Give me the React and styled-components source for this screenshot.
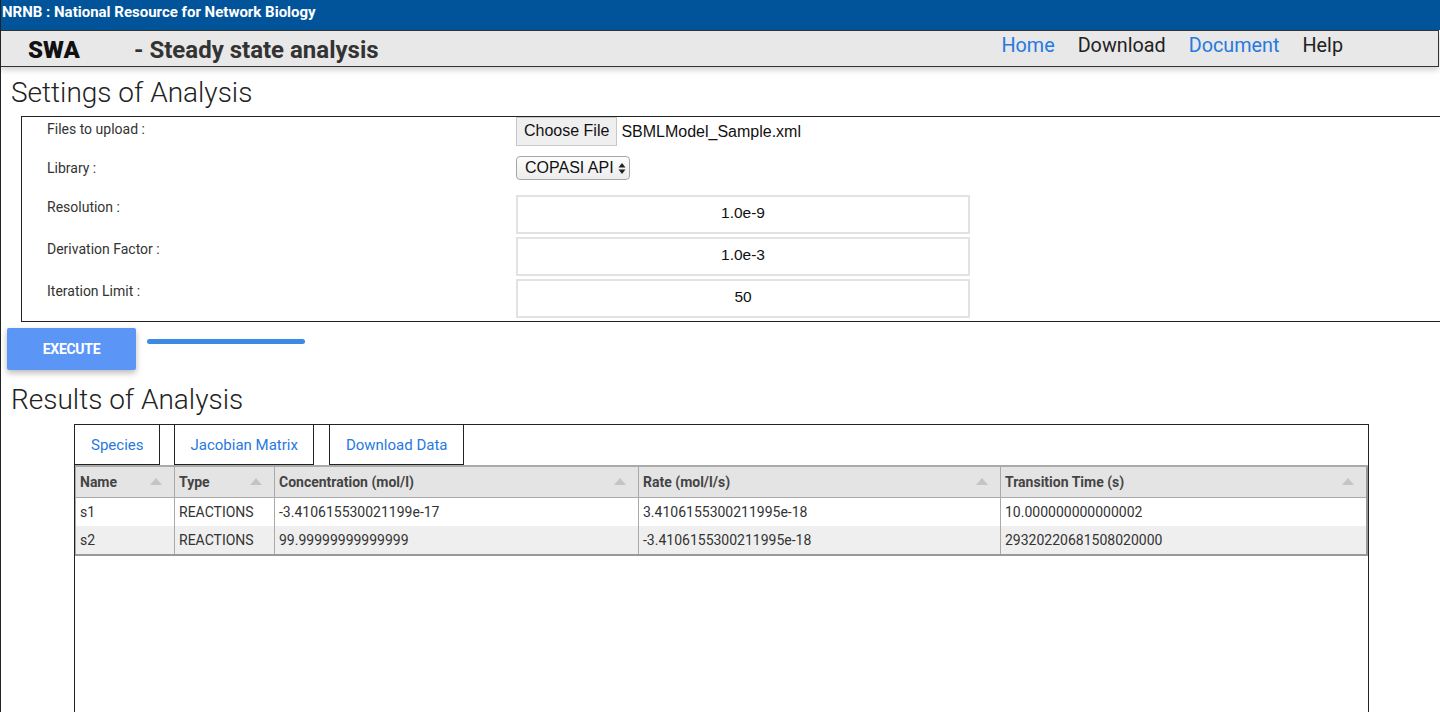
import React from "react";
import styled, { createGlobalStyle } from "styled-components";

const GlobalStyle = createGlobalStyle`
  html, body {
    margin: 0;
    padding: 0;
    background: #fff;
    overflow: hidden;
  }
  body {
    font-family: Roboto, "Liberation Sans", Arial, sans-serif;
    color: #333;
  }
`;

const Page = styled.div`
  height: 712px;
  border-left: 1px solid #222;
  box-sizing: border-box;
  overflow: hidden;
`;

const TopBar = styled.div`
  height: 30px;
  background: #02549a;
  color: #fff;
  font-weight: 700;
  font-size: 15px;
  line-height: 24px;
  padding-left: 1px;
`;

const NavBar = styled.div`
  height: 37px;
  box-sizing: border-box;
  width: 1439px;
  margin-left: -1px;
  display: flex;
  align-items: center;
  justify-content: space-between;
  background: #e8e8e8;
  border: 1px solid #333;
  box-shadow: 0 3px 6px rgba(0, 0, 0, 0.18);
  position: relative;
  padding: 0 95px 0 27px;
`;

const Brand = styled.div`
  display: flex;
  align-items: center;
  font-size: 24px;
  font-weight: 700;
  padding-top: 2px;

  b {
    color: #111;
    width: 106px;
  }
  span {
    color: #333;
  }
`;

const NavLinks = styled.nav`
  display: flex;
  gap: 23px;
  padding-bottom: 6px;
`;

const NavLink = styled.a`
  font-size: 19.8px;
  color: ${({ $active }) => ($active ? "#2779e0" : "#222")};
  text-decoration: none;
`;

const SectionTitle = styled.h2`
  margin: ${({ $top }) => $top}px 0 0 10px;
  font-size: 28px;
  font-weight: 300;
  line-height: 33px;
  color: #222;
  height: 33px;
`;

const SettingsBox = styled.div`
  margin: 7px 0 0 20px;
  border: 1px solid #222;
  border-right: none;
  padding: 0 0 3px 25px;
`;

const Row = styled.div`
  display: grid;
  grid-template-columns: 469px auto;
  align-items: start;
  height: ${({ $h }) => $h}px;
  margin-bottom: ${({ $gap }) => $gap}px;
`;

const Label = styled.div`
  font-size: 14px;
  line-height: 20px;
  margin-top: 2px;
  color: #333;
`;

const FileField = styled.div`
  display: flex;
  align-items: center;
  gap: 4px;
  font-family: "Liberation Sans", Arial, sans-serif;
  font-size: 16px;
  color: #111;
`;

const FileButton = styled.button`
  height: 29px;
  padding: 0 7px 2px;
  font-family: "Liberation Sans", Arial, sans-serif;
  font-size: 16px;
  color: #111;
  background: #efefef;
  border: 1px solid #c8c8c8;
  border-radius: 0;
`;

const SelectBox = styled.div`
  display: inline-flex;
  align-items: center;
  gap: 4px;
  height: 24px;
  box-sizing: border-box;
  padding: 0 3px 0 8px;
  border: 1px solid #a6a6a6;
  border-radius: 4px;
  background: linear-gradient(#fdfdfd, #ececec);
  font-family: "Liberation Sans", Arial, sans-serif;
  font-size: 16px;
  color: #111;
`;

const NumberInput = styled.input`
  width: 454px;
  height: 39px;
  box-sizing: border-box;
  border: 2px solid #e2e2e2;
  padding: 0 0 3px;
  text-align: center;
  font-family: "Liberation Sans", Arial, sans-serif;
  font-size: 15.5px;
  color: #111;
  background: #fff;
  outline: none;
`;

const ActionRow = styled.div`
  display: flex;
  align-items: flex-start;
  gap: 11px;
  margin: 6px 0 0 6px;
`;

const ExecuteButton = styled.button`
  width: 129px;
  height: 42px;
  border: none;
  border-radius: 2px;
  background: #5b96f6;
  color: #fff;
  font-family: Roboto, sans-serif;
  font-weight: 700;
  font-size: 14px;
  letter-spacing: -0.3px;
  box-shadow: 0 3px 6px rgba(0, 0, 0, 0.28);
`;

const Progress = styled.div`
  margin-top: 11px;
  width: 158px;
  height: 5px;
  border-radius: 3px;
  background: #3a8ae6;
`;

const ResultsBox = styled.div`
  margin: 8px 0 0 73px;
  width: 1295px;
  height: 320px;
  box-sizing: border-box;
  border: 1px solid #222;
  border-bottom: none;
`;

const Tabs = styled.div`
  display: flex;
  gap: 14px;
  margin: -1px 0 0 -1px;
`;

const Tab = styled.div`
  height: 41px;
  box-sizing: border-box;
  border: 1px solid #222;
  padding: 0 ${({ $pad }) => $pad}px;
  margin-left: ${({ $shift }) => $shift || 0}px;
  display: flex;
  align-items: center;
  font-size: 15px;
  color: #2779e0;
`;

const Table = styled.table`
  width: 1291px;
  border-collapse: collapse;
  table-layout: fixed;
  font-size: 14px;
  border-right: 2px solid #999;
  border-bottom: 2px solid #999;
`;

const Th = styled.th`
  height: 31px;
  box-sizing: border-box;
  background: #e4e4e4;
  border: 1px solid #aaa;
  border-top: 2px solid #aaa;
  text-align: left;
  padding: 0 4px;
  font-weight: 700;
  color: #444;

  div {
    display: flex;
    justify-content: space-between;
    align-items: center;
  }
`;

const Td = styled.td`
  height: 29px;
  box-sizing: border-box;
  border: 1px solid #aaa;
  border-top: none;
  border-bottom: none;
  padding: 0 4px;
  color: #333;
`;

const Tr = styled.tr`
  background: ${({ $alt }) => ($alt ? "#efefef" : "#fff")};
`;

const SortArrow = () => (
  <svg width="12" height="7" viewBox="0 0 12 7" style={{ marginRight: 8 }}>
    <polygon points="6,0 12,7 0,7" fill="#c4c4c4" />
  </svg>
);

const UpDown = () => (
  <svg width="8" height="13" viewBox="0 0 8 13">
    <polygon points="4,1 7.5,5.5 0.5,5.5" fill="#222" />
    <polygon points="4,12 7.5,7.5 0.5,7.5" fill="#222" />
  </svg>
);

const columns = [
  { name: "Name", width: 99 },
  { name: "Type", width: 100 },
  { name: "Concentration (mol/l)", width: 364 },
  { name: "Rate (mol/l/s)", width: 362 },
  { name: "Transition Time (s)", width: 366 },
];

const rows = [
  ["s1", "REACTIONS", "-3.410615530021199e-17", "3.4106155300211995e-18", "10.000000000000002"],
  ["s2", "REACTIONS", "99.99999999999999", "-3.4106155300211995e-18", "29320220681508020000"],
];

const settings = [
  { label: "Resolution :", value: "1.0e-9", gap: 3 },
  { label: "Derivation Factor :", value: "1.0e-3", gap: 3 },
  { label: "Iteration Limit :", value: "50", gap: 0 },
];

export default function App() {
  return (
    <>
      <GlobalStyle />
      <Page>
        <TopBar>NRNB : National Resource for Network Biology</TopBar>
        <NavBar>
          <Brand>
            <b>SWA</b>
            <span>- Steady state analysis</span>
          </Brand>
          <NavLinks>
            <NavLink $active>Home</NavLink>
            <NavLink>Download</NavLink>
            <NavLink $active>Document</NavLink>
            <NavLink>Help</NavLink>
          </NavLinks>
        </NavBar>

        <SectionTitle $top={9}>Settings of Analysis</SectionTitle>
        <SettingsBox>
          <Row $h={29} $gap={10}>
            <Label>Files to upload :</Label>
            <FileField>
              <FileButton>Choose File</FileButton>
              <span>SBMLModel_Sample.xml</span>
            </FileField>
          </Row>
          <Row $h={24} $gap={15}>
            <Label>Library :</Label>
            <div>
              <SelectBox>
                COPASI API <UpDown />
              </SelectBox>
            </div>
          </Row>
          {settings.map((s) => (
            <Row key={s.label} $h={39} $gap={s.gap}>
              <Label>{s.label}</Label>
              <NumberInput readOnly value={s.value} />
            </Row>
          ))}
        </SettingsBox>

        <ActionRow>
          <ExecuteButton>EXECUTE</ExecuteButton>
          <Progress />
        </ActionRow>

        <SectionTitle $top={13}>Results of Analysis</SectionTitle>
        <ResultsBox>
          <Tabs>
            <Tab $pad={16}>Species</Tab>
            <Tab $pad={15}>Jacobian Matrix</Tab>
            <Tab $pad={16} $shift={1}>Download Data</Tab>
          </Tabs>
          <Table>
            <colgroup>
              {columns.map((c) => (
                <col key={c.name} style={{ width: c.width }} />
              ))}
            </colgroup>
            <thead>
              <tr>
                {columns.map((c) => (
                  <Th key={c.name}>
                    <div>
                      {c.name}
                      <SortArrow />
                    </div>
                  </Th>
                ))}
              </tr>
            </thead>
            <tbody>
              {rows.map((r, i) => (
                <Tr key={r[0]} $alt={i % 2 === 1}>
                  {r.map((cell, j) => (
                    <Td key={j}>{cell}</Td>
                  ))}
                </Tr>
              ))}
            </tbody>
          </Table>
        </ResultsBox>
      </Page>
    </>
  );
}
